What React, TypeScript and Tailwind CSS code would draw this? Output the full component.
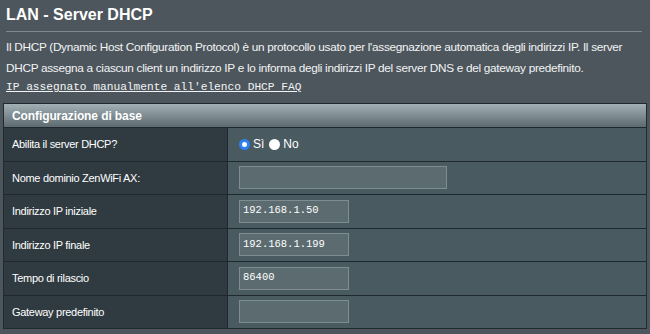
const rows = [
  { label: "Abilita il server DHCP?", kind: "radio" },
  { label: "Nome dominio ZenWiFi AX:", kind: "input", value: "", width: "w-[208px]" },
  { label: "Indirizzo IP iniziale", kind: "input", value: "192.168.1.50", width: "w-[110px]" },
  { label: "Indirizzo IP finale", kind: "input", value: "192.168.1.199", width: "w-[110px]" },
  { label: "Tempo di rilascio", kind: "input", value: "86400", width: "w-[110px]" },
  { label: "Gateway predefinito", kind: "input", value: "", width: "w-[110px]" },
];

function Radio({ checked }: { checked: boolean }) {
  return checked ? (
    <span className="inline-block h-[11px] w-[11px] rounded-full border-[3px] border-[#2f7ff0] bg-white" />
  ) : (
    <span className="inline-block h-[11px] w-[11px] rounded-full bg-white" />
  );
}

export default function App() {
  return (
    <div className="h-[334px] w-[650px] overflow-hidden bg-[#4d565c] font-['Liberation_Sans',Arial,sans-serif] text-white">
      {/* Title */}
      <div className="px-[6px] pt-[5px]">
        <h1 className="text-[16px] font-bold leading-[20px]">LAN - Server DHCP</h1>
        <div className="mt-[6px] h-px w-[636px] bg-[#7d878c]" />
      </div>

      {/* Description */}
      <div className="px-[6px] pt-[5px] text-[11.8px] leading-[21px] tracking-[-0.3px] text-[#f2f4f5]">
        <p className="w-[630px]">
          Il DHCP (Dynamic Host Configuration Protocol) è un protocollo usato per l'assegnazione automatica degli indirizzi IP. Il server DHCP assegna a ciascun client un indirizzo IP e lo informa degli indirizzi IP del server DNS e del gateway predefinito.
        </p>
        <a className="block font-['Liberation_Mono',monospace] text-[11.2px] leading-[16px] tracking-normal underline">
          IP assegnato manualmente all'elenco DHCP FAQ
        </a>
      </div>

      {/* Table */}
      <div className="ml-[3px] mt-[8px] w-[644px] border border-[#202a2f]">
        <div className="flex h-[23px] items-center bg-linear-to-b from-[#a3b0b5] to-[#5d6a70] px-[8px] text-[12px] font-bold tracking-[-0.1px]">
          Configurazione di base
        </div>
        {rows.map((r) => (
          <div key={r.label} className="flex h-[33.5px] border-t border-[#1e282d]">
            <div className="flex w-[224px] items-center border-r border-[#1e282d] bg-[#303b41] pl-[8px] text-[11px] tracking-[-0.3px]">
              {r.label}
            </div>
            <div className="flex flex-1 items-center bg-[#4a5a61] pl-[11px]">
              {r.kind === "radio" ? (
                <div className="flex items-center text-[12px]">
                  <Radio checked />
                  <span className="ml-[3px]">Sì</span>
                  <span className="ml-[5px]" />
                  <Radio checked={false} />
                  <span className="ml-[3px]">No</span>
                </div>
              ) : (
                <div
                  className={`${r.width} flex h-[23px] items-center border border-[#7d8d92] bg-[#5b6b70] px-[3px] font-['Liberation_Mono',monospace] text-[10.5px]`}
                >
                  {r.value}
                </div>
              )}
            </div>
          </div>
        ))}
      </div>
    </div>
  );
}
